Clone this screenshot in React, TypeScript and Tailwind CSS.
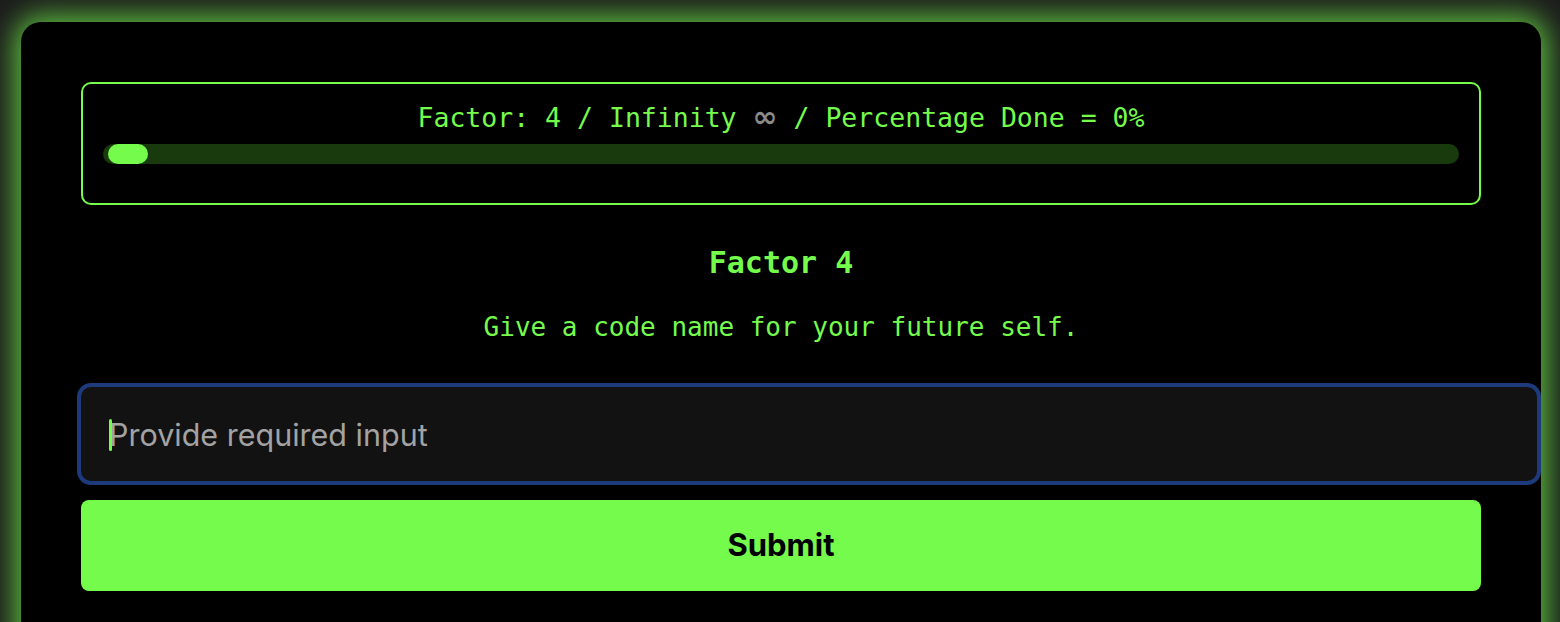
import React from "react";

const GREEN = "#75fb4c";

export default function App() {
  return (
    <div className="min-h-screen overflow-hidden bg-[#1c1d1c] pl-[21px] pt-[22px]">
      <main className="w-[1520px] rounded-[20px] bg-black px-[60px] pt-[60px] pb-[80px] shadow-[0_0_28px_7px_rgba(117,251,76,0.7)]">
        {/* progress panel */}
        <section className="rounded-[10px] border-2 border-[#75fb4c] px-5 pt-[14px] pb-[39px] font-['DejaVu_Sans_Mono',monospace] text-[#75fb4c]">
          <p className="text-center text-[26.5px] leading-[40px]">
            Factor: 4 / Infinity{" "}
            <span className="font-['DejaVu_Sans',sans-serif] text-[30px] leading-none font-bold text-[#8a8a8a]">∞</span> /
            Percentage Done = 0%
          </p>
          <div className="mt-[6px] flex h-5 rounded-full bg-[#183a0c] pl-[5px]">
            <div className="h-full w-10 rounded-full" style={{ backgroundColor: GREEN }} />
          </div>
        </section>

        <h1 className="mt-[38px] text-center font-['DejaVu_Sans_Mono',monospace] text-[30px] leading-[40px] font-bold text-[#75fb4c]">
          Factor 4
        </h1>
        <p className="mt-6 text-center font-['DejaVu_Sans_Mono',monospace] text-[26px] leading-[40px] text-[#75fb4c]">
          Give a code name for your future self.
        </p>

        <div className="relative mt-10">
          <input
            type="text"
            placeholder="Provide required input"
            className="box-content h-[94px] w-full rounded-[10px] bg-[#121212] px-7 py-0 font-['Inter',sans-serif] text-[30.5px] text-white outline-none ring-4 ring-[#1d3a7c] placeholder:text-[#a3a3a3]"
          />
          <span className="pointer-events-none absolute top-[32px] left-[28px] h-[32px] w-[3px] rounded-sm bg-[#75fb4c]" />
        </div>

        <button className="mt-[19px] h-[91px] w-full rounded-[8px] bg-[#75fb4c] font-['Inter',sans-serif] text-[31px] font-bold text-black">
          Submit
        </button>
      </main>
    </div>
  );
}
